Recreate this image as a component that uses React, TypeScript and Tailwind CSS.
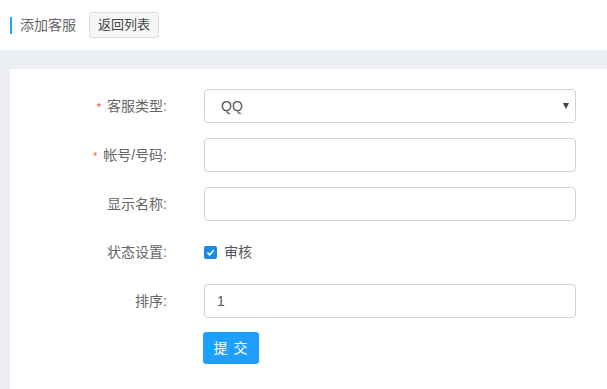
const font = {
  fontFamily: '"Liberation Sans", "Noto Sans CJK SC", sans-serif',
};

type Row = {
  label: string;
  required?: boolean;
  children: React.ReactNode;
};

function FormRow({ label, required, children }: Row) {
  return (
    <div className="flex items-center">
      <div className="flex w-[157px] items-center justify-end text-[14px] text-[#666]">
        {required && <span className="mr-[6px] mt-[3px] text-[11px] text-[#ff4d2e]">*</span>}
        <span>{label}</span>
      </div>
      <div className="ml-[37px] w-[372px]">{children}</div>
    </div>
  );
}

function TextBox({ value }: { value?: string }) {
  return (
    <div className="flex h-[34px] items-center rounded-[4px] border border-[#d2d2d2] bg-white pl-[12px] text-[14px] text-[#555]">
      {value}
    </div>
  );
}

export default function App() {
  return (
    <div className="flex h-[389px] w-[607px] flex-col overflow-hidden bg-[#ebeef2]" style={font}>
      <header className="flex h-[50px] shrink-0 items-center bg-white">
        <span className="ml-[10px] h-[17px] w-[2px] bg-[#1e9fff]" />
        <span className="ml-[8px] text-[14px] text-[#666]">添加客服</span>
        <button className="ml-[13px] h-[26px] w-[70px] rounded-[3px] border border-[#dcdcdc] bg-[#f6f6f6] text-[13px] text-[#444]">
          返回列表
        </button>
      </header>

      <main className="ml-[10px] mt-[19px] flex flex-1 flex-col gap-[15px] bg-white pt-[20px]">
        <FormRow label="客服类型:" required>
          <div className="flex h-[34px] items-center justify-between rounded-[4px] border border-[#d2d2d2] bg-white pl-[16px] pr-[6px] text-[14px] text-[#555]">
            <span>QQ</span>
            <span className="h-0 w-0 border-x-[3.5px] border-t-[6px] border-x-transparent border-t-[#444]" />
          </div>
        </FormRow>
        <FormRow label="帐号/号码:" required>
          <TextBox />
        </FormRow>
        <FormRow label="显示名称:">
          <TextBox />
        </FormRow>
        <FormRow label="状态设置:">
          <div className="flex h-[33px] items-center">
            <span className="flex h-[13px] w-[13px] items-center justify-center rounded-[2px] bg-[#1e88e5]">
              <svg width="9" height="9" viewBox="0 0 10 10" fill="none">
                <path d="M1.5 5.2 L4 7.5 L8.5 2.5" stroke="white" strokeWidth="1.8" />
              </svg>
            </span>
            <span className="ml-[7px] text-[14px] text-[#555]">审核</span>
          </div>
        </FormRow>
        <FormRow label="排序:">
          <TextBox value="1" />
        </FormRow>
        <div className="-mt-[1px] pl-[193px]">
          <button className="h-[32px] w-[56px] rounded-[3px] bg-[#1e9fff] text-[14px] tracking-[1px] text-white">
            提 交
          </button>
        </div>
      </main>
    </div>
  );
}
